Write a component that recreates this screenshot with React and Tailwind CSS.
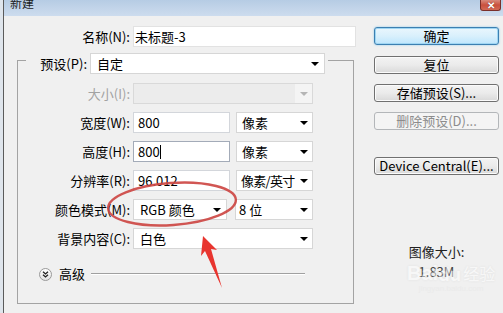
import React from 'react';

const Arrow = ({ disabled }) => (
  <span
    className={`shrink-0 w-0 h-0 border-l-[4px] border-r-[4px] border-t-[4px] border-l-transparent border-r-transparent ${
      disabled ? 'border-t-[#b5b5b5]' : 'border-t-black'
    }`}
  />
);

function Select({ value, className = '', pad = 'pl-[6px] pr-[5px]', textClass = '' }) {
  return (
    <div
      className={`h-[21px] flex items-center justify-between bg-white border border-[#d6d6d6] ${pad} ${className}`}
    >
      <span className={`leading-[19px] whitespace-nowrap ${textClass}`}>{value}</span>
      <Arrow />
    </div>
  );
}

function Field({ value, focused, className = '' }) {
  return (
    <div
      className={`h-[21px] flex items-center bg-white border pl-[4px] ${
        focused ? 'border-[#a3abb8]' : 'border-[#d3d6db]'
      } ${className}`}
    >
      <span className="leading-[19px]">{value}</span>
      {focused && <span className="w-px h-[14px] bg-black" />}
    </div>
  );
}

function Row({ label, children, disabled }) {
  return (
    <div className="h-[21px] flex items-center">
      <span
        className={`w-[112px] text-right leading-[19px] whitespace-nowrap ${
          disabled ? 'text-[#a2a2a2]' : ''
        }`}
      >
        {label}
      </span>
      <div className="ml-[3px] flex items-center">{children}</div>
    </div>
  );
}

function Btn({ children, kind = 'normal', className = '' }) {
  const styles = {
    normal:
      'border-[#707070] bg-gradient-to-b from-[#f3f3f3] via-[#ebebeb] to-[#d9d9d9] text-black shadow-[inset_0_0_0_1px_#fbfbfb]',
    main: 'border-[#3c7fb1] bg-gradient-to-b from-[#eaf6fd] via-[#d9f0fc] to-[#bee6fd] text-black shadow-[inset_0_0_0_1px_#9fd6f3,0_0_2px_#7ec4ec]',
    off: 'border-[#b3b6b9] bg-[#f4f4f4] text-[#8c8c8c]',
  };
  return (
    <div
      className={`h-[18px] rounded-[3px] border flex items-center justify-center leading-[16px] whitespace-nowrap ${styles[kind]} ${className}`}
    >
      {children}
    </div>
  );
}

export default function App() {
  return (
    <div className="w-[503px] h-[313px] overflow-hidden relative flex bg-[#f0f0f0] text-[13px] text-black font-['Noto_Sans_CJK_SC',sans-serif]">
      {/* window frame left */}
      <div className="w-[3px] bg-[#dfe5ec] border-r border-[#5b5b5b] box-content shrink-0" />

      <div className="flex-1 flex flex-col">
        {/* title bar */}
        <div className="h-[16px] flex items-start justify-between bg-gradient-to-b from-[#b6cce4] to-[#cddcee]">
          <span className="ml-[6px] -mt-[4px] text-[12px] leading-[14px] text-[#1c1c1c]">新建</span>
          <div className="mr-[2px] w-[21px] h-[11px] rounded-b-[3px] border border-t-0 border-[#7a2f2a] bg-gradient-to-b from-[#d88a7c] via-[#c9503e] to-[#d36a55] flex items-center justify-center">
            <span className="text-white text-[10px] leading-[10px] font-bold [text-shadow:0_0_1px_#5a1a14]">✕</span>
          </div>
        </div>

        <div className="flex-1 flex">
          {/* left column */}
          <div className="w-[352px] pt-[10px]">
            <div className="h-[21px] flex items-center">
              <span className="w-[126px] text-right leading-[19px]">名称(N):</span>
              <div className="ml-[3px] w-[223px] h-[21px] bg-white border border-[#e2e2e2] flex items-center pl-[1px]">
                <span className="leading-[19px]">未标题-3</span>
              </div>
            </div>

            <div className="mt-[13px] ml-[13px] w-[337px] h-[244px] border border-[#a3a3a3] flex flex-col">
              <div className="-mt-[8px] ml-[8px] w-fit bg-[#f0f0f0] pr-[3px] flex items-center">
                <span className="w-[61px] text-right leading-[19px]">预设(P):</span>
                <Select value="自定" className="ml-[3px] w-[235px]" />
              </div>

              <div className="mt-[9px] flex flex-col gap-[8px]">
                <Row label="大小(I):" disabled>
                  <div className="w-[180px] h-[21px] border border-[#d9d9d9] bg-[#f4f4f4] flex items-center">
                    <div className="flex-1 h-full bg-[#ececec]" />
                    <div className="w-[17px] flex justify-center">
                      <Arrow disabled />
                    </div>
                  </div>
                </Row>
                <Row label="宽度(W):">
                  <Field value="800" className="w-[97px]" />
                  <Select value="像素" pad="pl-[5px] pr-[4px]" className="ml-[6px] w-[77px]" />
                </Row>
                <Row label="高度(H):">
                  <Field value="800" focused className="w-[97px]" />
                  <Select value="像素" pad="pl-[5px] pr-[4px]" className="ml-[6px] w-[77px]" />
                </Row>
                <Row label="分辨率(R):">
                  <Field value="96.012" className="w-[97px]" />
                  <Select
                    value="像素/英寸"
                    pad="pl-[4px] pr-[4px]"
                    textClass="tracking-[-0.7px]"
                    className="ml-[6px] w-[77px]"
                  />
                </Row>
                <Row label="颜色模式(M):">
                  <Select value="RGB 颜色" className="w-[94px]" />
                  <Select value="8 位" pad="pl-[3px] pr-[4px]" className="ml-[8px] w-[78px]" />
                </Row>
                <Row label="背景内容(C):">
                  <Select value="白色" pad="pl-[6px] pr-[4px]" className="w-[180px]" />
                </Row>
              </div>

              <div className="mt-[17px] h-[16px] flex items-center">
                <div className="ml-[21px] w-[13px] h-[13px] rounded-full border border-[#9a9a9a] bg-gradient-to-b from-white to-[#e4e4e4] flex items-center justify-center">
                  <svg width="7" height="7" viewBox="0 0 7 7">
                    <path d="M1 0.8 L3.5 3 L6 0.8 M1 3.8 L3.5 6 L6 3.8" fill="none" stroke="#222" strokeWidth="1.3" />
                  </svg>
                </div>
                <span className="ml-[7px] leading-[16px]">高级</span>
                <div className="ml-[6px] mr-[48px] flex-1 border-t border-[#a0a0a0] border-b border-b-white" />
              </div>
            </div>
          </div>

          {/* right column */}
          <div className="ml-[18px] w-[125px] pt-[11px] flex flex-col">
            <Btn kind="main">确定</Btn>
            <Btn className="mt-[11px]">复位</Btn>
            <Btn className="mt-[10px]">存储预设(S)...</Btn>
            <Btn kind="off" className="mt-[10px]">删除预设(D)...</Btn>
            <Btn className="mt-[27px]">Device Central(E)...</Btn>
            <div className="mt-[69px] text-center leading-[16px] text-[#222]">图像大小:</div>
            <div className="mt-[4px] text-center leading-[16px] text-[#444]">1.83M</div>
          </div>
        </div>
      </div>

      {/* baidu watermark */}
      <div className="absolute left-[407px] top-[262px] flex flex-col items-center pointer-events-none opacity-50">
        <div className="flex items-end leading-[22px] text-white [text-shadow:0_0_2px_#d0d0d0]">
          <span className="text-[20px] font-bold font-['Liberation_Sans',sans-serif]">Bai</span>
          <span className="text-[18px] font-bold">du</span>
          <span className="ml-[2px] text-[16px]">经验</span>
        </div>
        <span className="text-[8px] leading-[10px] text-[#e6e6e6] font-['Liberation_Sans',sans-serif]">jingyan.baidu.com</span>
      </div>

      {/* red annotation */}
      <svg className="absolute left-0 top-0 pointer-events-none" width="503" height="313" viewBox="0 0 503 313">
        <ellipse cx="172" cy="204" rx="64" ry="21" transform="rotate(-4 172 204)" fill="none" stroke="#cc4440" strokeWidth="2.4" opacity="0.9" />
        <polygon
          points="203,236 217,250 211,249 222,288 205,251 201,256"
          fill="#e8352f"
        />
      </svg>
    </div>
  );
}
